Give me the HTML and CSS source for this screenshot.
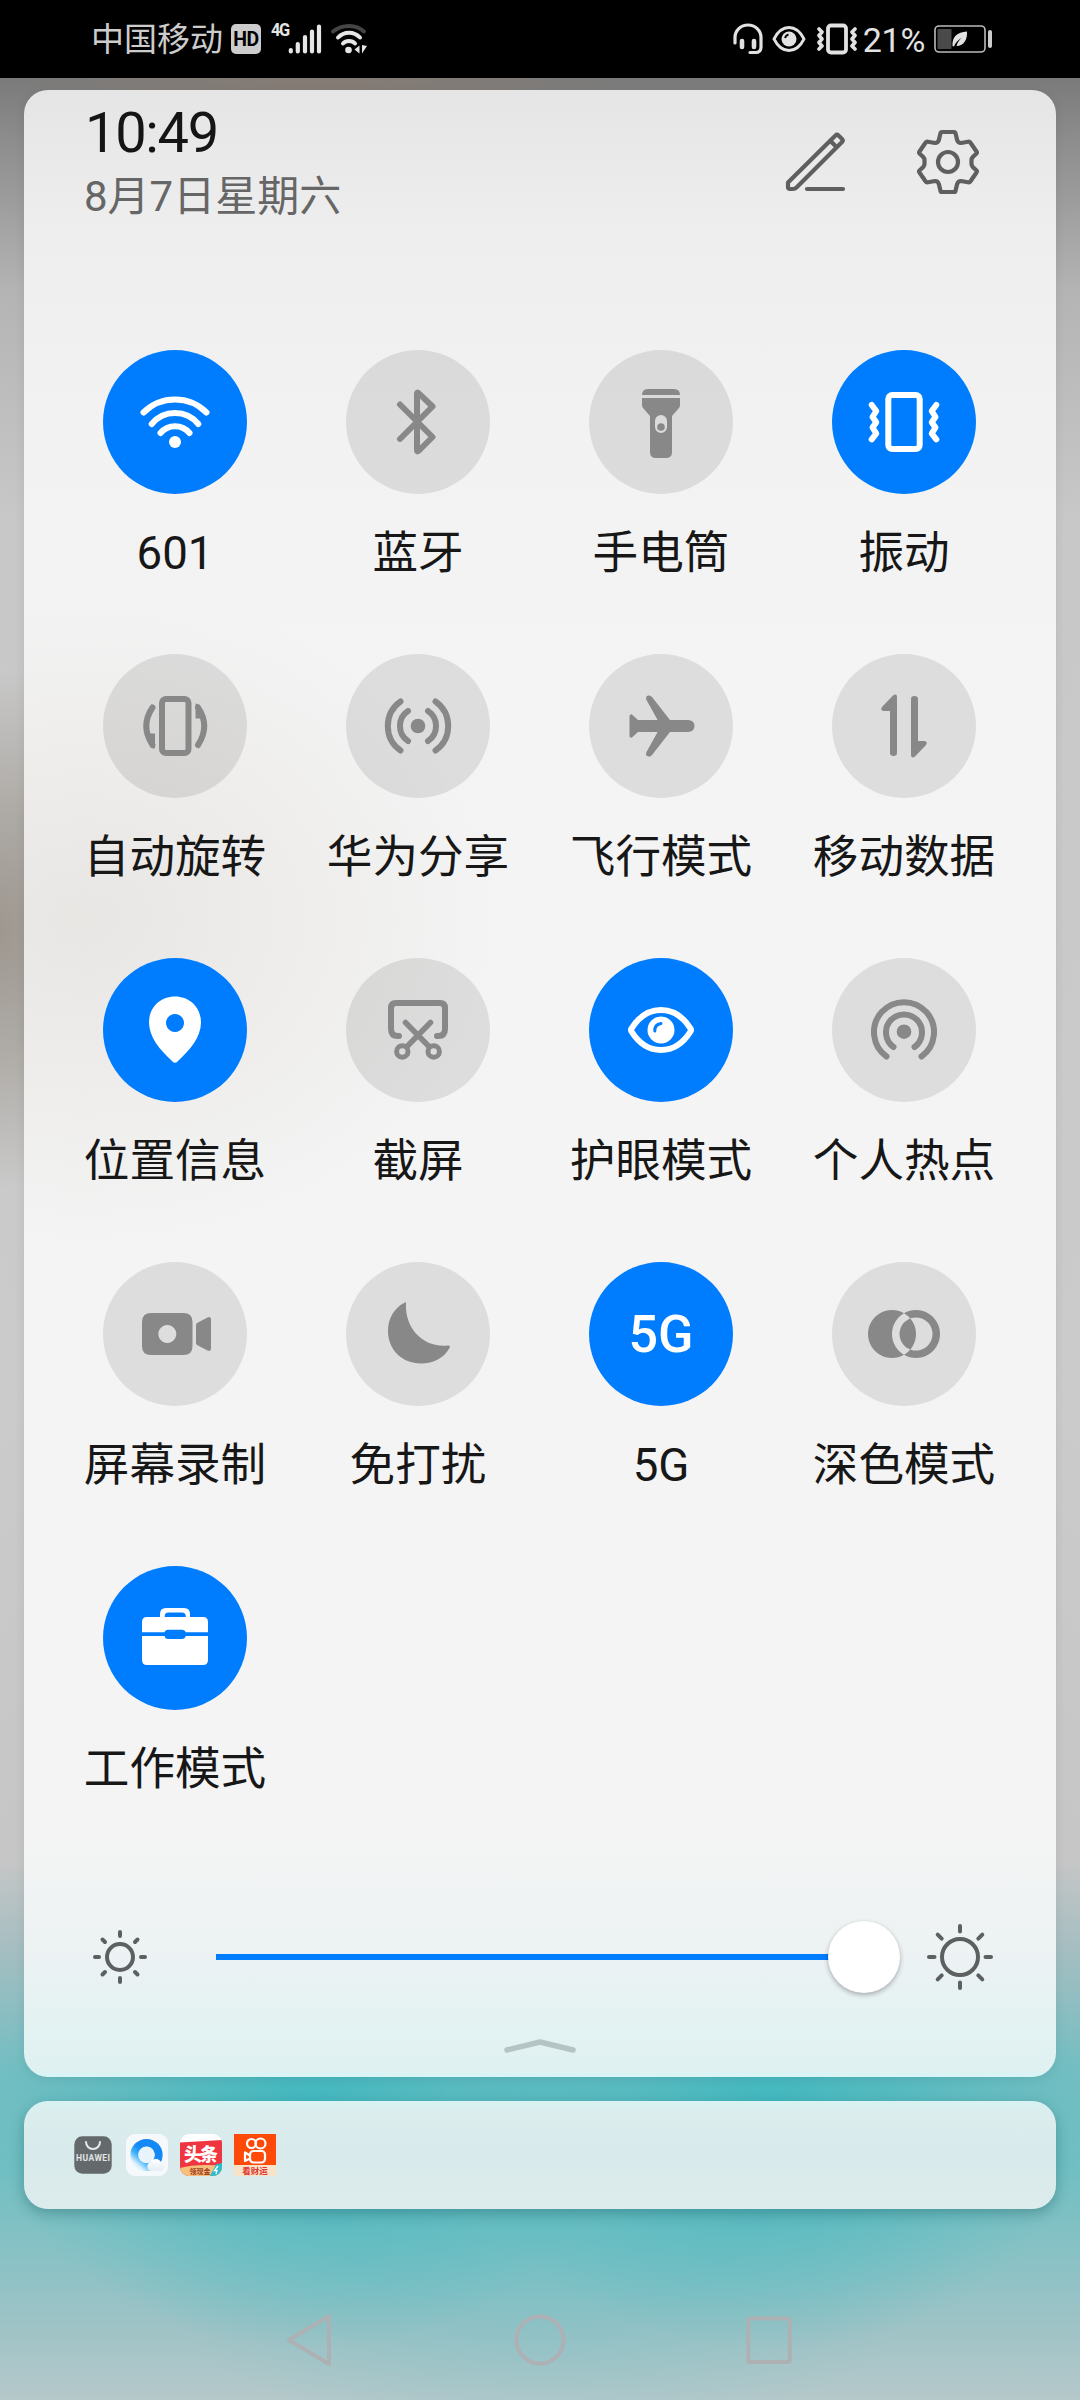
FILE: index.html
```
<!DOCTYPE html>
<html lang="zh-CN">
<head>
<meta charset="utf-8">
<title>控制中心</title>
<link rel="stylesheet" href="styles.css">
</head>
<body>
<div class="screen">
  <header class="status">
    <div class="status-left">
      <span class="carrier">中国移动</span>
      <span class="hd">HD</span>
      <span class="net">4G</span>
      <svg class="signal" width="34" height="32" viewBox="0 0 34 32" stroke="#e6e6e6" stroke-width="4.2" stroke-linecap="round"><path d="M2.800 27v1.400M9.800 21v7.400M17 14v14.400M24 8.500v20M31 3.500v25"/></svg>
      <svg class="wifi-small" width="38" height="32" viewBox="0 0 38 32" fill="none" stroke-width="4" stroke-linecap="round"><path d="M3 8.500C12 1 26 1 34 8.500" stroke="#444"/><path d="M8 14.500C14 8 24 8 30 14.500M13 20.500C16 17 22 17 25 20.500" stroke="#e6e6e6"/><circle cx="18.500" cy="27" r="3.300" fill="#e6e6e6"/><path d="M29.500 22.500v8l-5-4zM32 22l5 1-5 7.500z" fill="#e6e6e6"/></svg>
    </div>
    <div class="status-right">
      <svg width="30" height="32" viewBox="0 0 30 32" fill="none" stroke="#e2e2e2" stroke-width="3.200" stroke-linecap="round"><path d="M2 20v-5.500a13 12.500 0 0 1 26 0V24q0 5.500-5.500 5.500H17"/><path d="M9 18v6M21 18v6" stroke-width="4.600"/></svg>
      <svg class="st-eye" width="34" height="28" viewBox="0 0 34 28" fill="none" stroke="#e2e2e2" stroke-width="2.800"><path d="M2 14C6 6 11 2.500 17 2.500S28 6 32 14C28 22 23 25.500 17 25.500S6 22 2 14z"/><circle cx="17" cy="14" r="7.500" fill="#e2e2e2" stroke="none"/><path d="M13 13a5 5 0 0 1 3.500-3.500" stroke="#000" stroke-width="2"/></svg>
      <svg class="st-vib" width="40" height="32" viewBox="0 0 40 32" fill="none" stroke="#e2e2e2" stroke-width="3.800" stroke-linecap="round" stroke-linejoin="round"><rect x="11" y="2.500" width="18" height="27" rx="3"/><path d="M2 6l3 3-3 3.500 3 3.500-3 3.500 3 3.500-3 3M38 6l-3 3 3 3.500-3 3.500 3 3.500-3 3.500 3 3" stroke-width="3.600"/></svg>
      <span class="percent">21%</span>
      <svg width="58" height="28" viewBox="0 0 58 28"><rect x="1" y="1" width="50" height="26" rx="4" fill="none" stroke="#bbb" stroke-width="1.600"/><rect x="3.500" y="4" width="14" height="20" rx="1" fill="#4a4a4a"/><path d="M18.500 21C18 12 23 7 33 6.500C33.500 14 30 21 22.500 21C23 18 25.500 14.500 28 12.500C24 15 21 18 20 21.500z" fill="#e2e2e2"/><rect x="54" y="5" width="4" height="18" rx="2" fill="#ccc"/></svg>
    </div>
  </header>

  <main class="shade">
    <section class="panel">
      <div class="head">
        <div class="clock">
          <div class="time">10:49</div>
          <div class="date">8月7日星期六</div>
        </div>
        <div class="actions">
          <svg width="64" height="66" viewBox="0 0 64 66" fill="none" stroke="#5f5f5f" stroke-width="4.200" stroke-linecap="round" stroke-linejoin="round"><path d="M4 53.500L51.500 6.500Q53 5 54.500 6.500L58 10Q59.500 11.500 58 13L12.500 58.500Q11 60 9 60H6Q4 60 4 58z"/><path d="M46.500 12l6 6M23 60H59"/></svg>
          <svg width="66" height="66" viewBox="-33 -33 66 66" fill="none" stroke="#5f5f5f" stroke-width="4.200" stroke-linejoin="round"><path d="M-6 -30H6Q7.300 -30 7.600 -28.500L9 -22.500Q9.800 -19 13 -19L20 -20.300Q21.600 -20.600 22.500 -19.300L28.500 -10.500Q29.300 -9.300 28.500 -8.500L24.800 -5Q23.500 -3.500 23.500 -2V2Q23.500 3.500 24.800 5L28.500 8.500Q29.300 9.300 28.500 10.500L22.500 19.300Q21.600 20.600 20 20.300L13 19Q9.800 19 9 22.500L7.600 28.500Q7.300 30 6 30H-6Q-7.300 30 -7.600 28.500L-9 22.500Q-9.800 19 -13 19L-20 20.300Q-21.600 20.600 -22.500 19.300L-28.500 10.500Q-29.300 9.300 -28.500 8.500L-24.800 5Q-23.500 3.500 -23.500 2V-2Q-23.500 -3.500 -24.800 -5L-28.500 -8.500Q-29.300 -9.300 -28.500 -10.500L-22.500 -19.300Q-21.600 -20.600 -20 -20.300L-13 -19Q-9.800 -19 -9 -22.500L-7.600 -28.500Q-7.300 -30 -6 -30z"/><circle r="10"/></svg>
        </div>
      </div>

      <div class="tiles">
        <div class="tile on"><svg class="icon line" viewBox="0 0 144 144"><path d="M40.500 62.500A44.700 44.700 0 0 1 103.500 62.500M48.700 74A30.200 30.200 0 0 1 95.300 74M57.500 83A19 19 0 0 1 86.500 83"/><circle class="solid" cx="72" cy="92" r="6"/></svg><span>601</span></div>
        <div class="tile"><svg class="icon line" viewBox="0 0 144 144"><path d="M54 54.500L86.500 87L73 100.500Q71 102.500 71 100V44Q71 41.500 73 43.500L86.500 56.500L54 89"/></svg><span>蓝牙</span></div>
        <div class="tile"><svg class="icon" viewBox="0 0 144 144"><path d="M59 39H85Q91 39 91 45H53Q53 39 59 39z"/><path fill-rule="evenodd" d="M53 48H91V55Q91 57 90 58L83 66V102Q83 108 77 108H67Q61 108 61 102V66L54 58Q53 57 53 55zM72 65a6 6 0 0 0-6 6v6a6 6 0 0 0 12 0v-6a6 6 0 0 0-6-6z"/><circle cx="72" cy="77" r="3.800"/></svg><span>手电筒</span></div>
        <div class="tile on"><svg class="icon line" viewBox="0 0 144 144"><rect x="56.300" y="45" width="31.400" height="54" rx="4"/><path d="M39.700 55L44.300 61L40.500 67L44.300 72.200L40.500 77.500L44.300 83.500L39.700 89.300M104.300 55L99.700 61L103.500 67L99.700 72.200L103.500 77.500L99.700 83.500L104.300 89.300"/></svg><span>振动</span></div>

        <div class="tile"><svg class="icon line" viewBox="0 0 144 144"><rect x="59" y="45" width="26.500" height="54" rx="4"/><path d="M49.500 53.500Q37 72 49.500 91M95 91Q107.500 72 95 53.500"/><path class="solid" d="M43 79.500H52V93Q52 96 49.500 94zM101.500 64.500H92.500V51Q92.500 48.500 95 50.500z"/></svg><span>自动旋转</span></div>
        <div class="tile"><svg class="icon line" viewBox="0 0 144 144"><circle class="solid" cx="72" cy="72" r="7.300"/><path d="M62 57A18 18 0 0 0 62 87M82 57A18 18 0 0 1 82 87M54.500 47.500A30 30 0 0 0 54.500 96.500M89.500 47.500A30 30 0 0 1 89.500 96.500"/></svg><span>华为分享</span></div>
        <div class="tile"><svg class="icon" viewBox="0 0 144 144"><path d="M41.500 60.500Q42.500 60 43.500 61L49 66H68.600L57.500 46Q56 42.500 59 41.500Q61.500 41 63 43L81 66H99Q105.500 66.500 105.500 72Q105.500 77.500 99 78H81L63 101Q61.500 103 59 102.500Q56 101.500 57.500 98L68.600 78H49L43.500 83Q42.500 84 41.500 83.500Q40.500 83 40.500 82V62Q40.500 61 41.500 60.500z"/></svg><span>飞行模式</span></div>
        <div class="tile"><svg class="icon" viewBox="0 0 144 144"><path d="M65 43V99Q65 102 61.600 102Q58 102 58 99V57H51.500Q48 56.500 50 53L61 41.500Q65 39 65 43zM79 101V45Q79 42 82.400 42Q86 42 86 45V87H92.500Q96 87.500 94 91L83 102.500Q79 105 79 101z"/></svg><span>移动数据</span></div>

        <div class="tile on"><svg class="icon" viewBox="0 0 144 144"><path fill-rule="evenodd" d="M72 38.500C57 38.500 46 49.500 46 64.500C46 79 57 92 69.500 103.500Q72 106 74.500 103.500C87 92 98 79 98 64.500C98 49.500 87 38.500 72 38.500zM72 56a9 9 0 1 0 .01 0z"/></svg><span>位置信息</span></div>
        <div class="tile"><svg class="icon line" viewBox="0 0 144 144"><path d="M53 78H52Q45 78 45 71V50Q45 45 50 45H94Q99 45 99 50V71Q99 78 92 78H91"/><path d="M59.500 64.500L83 88.500M84.500 64.500L61 88.500" stroke-width="5.500"/><circle cx="56.300" cy="93.500" r="5.700" stroke-width="5"/><circle cx="87.700" cy="93.500" r="5.700" stroke-width="5"/></svg><span>截屏</span></div>
        <div class="tile on"><svg class="icon line" viewBox="0 0 144 144"><path d="M42.500 70.500C50 58.500 60 52 72 52S94 58.500 101.500 70.500Q102.500 72 101.500 73.500C94 85.500 84 92 72 92S50 85.500 42.500 73.500Q41.500 72 42.500 70.500z"/><circle class="solid" cx="72" cy="72" r="13.500"/><path d="M65.800 73Q65.500 66.500 72 65.500" class="glint"/></svg><span>护眼模式</span></div>
        <div class="tile"><svg class="icon line" viewBox="0 0 144 144"><circle class="solid" cx="72" cy="73.700" r="7.300"/><path d="M61.500 89A18 18 0 1 1 82.500 89M54.500 98.500A30 30 0 1 1 89.500 98.500"/></svg><span>个人热点</span></div>

        <div class="tile"><svg class="icon" viewBox="0 0 144 144"><path fill-rule="evenodd" d="M48 51H80.500Q89.500 51 89.500 60V84Q89.500 93 80.500 93H48Q39 93 39 84V60Q39 51 48 51zM64.300 63a9 9 0 1 0 .01 0z"/><path d="M93 63Q93 62 94 61L104.500 55.500Q108 54 108 57.500V86.500Q108 90 104.500 88.500L94 83Q93 82 93 81z"/></svg><span>屏幕录制</span></div>
        <div class="tile"><svg class="icon" viewBox="0 0 144 144"><path d="M58 41Q60.500 39 60 42.500C59 66 77 86 101.500 83.500Q105 83 103.500 86C98 96 87.500 101.500 75 101.500C56 101.500 42 87.500 42 69C42 56 48.500 46 58 41z"/></svg><span>免打扰</span></div>
        <div class="tile on"><div class="icon word">5G</div><span>5G</span></div>
        <div class="tile"><svg class="icon" viewBox="0 0 144 144"><path fill-rule="evenodd" d="M60 48a24 24 0 1 0 .01 0zM84 48a24 24 0 1 0 .01 0zM84 55.500a16.500 16.500 0 1 0 .01 0z"/></svg><span>深色模式</span></div>

        <div class="tile on"><svg class="icon" viewBox="0 0 144 144"><path fill-rule="evenodd" d="M57 51V48Q57 42 63 42H81Q87 42 87 48V51H100Q105 51 105 56V66.300H82.700Q82 63.700 79 63.700H65Q62 63.700 61.700 66.300H39V56Q39 51 44 51zM61.700 51H82.700V50Q82.700 46.500 79 46.500H65.500Q61.700 46.500 61.700 50z"/><path d="M39 70H61.700Q62 73 65 73H79Q82 73 82.700 70H105V94Q105 99 100 99H44Q39 99 39 94z"/></svg><span>工作模式</span></div>
      </div>

      <div class="brightness">
        <svg class="sun-s" width="56" height="56" viewBox="-28 -28 56 56"><circle r="13"/><path d="M0 -21V-25M0 21V25M-21 0H-25M21 0H25M-15 -15L-17.500 -17.500M15 -15L17.500 -17.500M-15 15L-17.500 17.500M15 15L17.500 17.500"/></svg>
        <div class="slider"><div class="thumb"></div></div>
        <svg class="sun-l" width="68" height="68" viewBox="-34 -34 68 68"><circle r="18"/><path d="M0 -25.500V-31M0 25.500V31M-25.500 0H-31M25.500 0H31M-18.300 -18.300L-22.300 -22.300M18.300 -18.300L22.300 -22.300M-18.300 18.300L-22.300 22.300M18.300 18.300L22.300 22.300"/></svg>
      </div>
      <svg class="collapse" width="74" height="20" viewBox="0 0 74 20" fill="none" stroke="#b4c3c4" stroke-width="5.500" stroke-linecap="round" stroke-linejoin="round"><path d="M4 13L37 5L70 13"/></svg>
    </section>

    <section class="notices">
      <svg width="42" height="42" viewBox="0 0 42 42"><rect x="2.300" y="2.300" width="37.400" height="37.400" rx="8" fill="#64696b"/><path d="M14 8a7 7 0 0 0 14 0" fill="none" stroke="#e6eaea" stroke-width="2" stroke-linecap="round"/><text class="lbl-hw" x="21" y="27" textLength="34">HUAWEI</text></svg>
      <svg width="42" height="42" viewBox="0 0 42 42"><defs><linearGradient id="qb" x1=".9" y1=".2" x2=".2" y2="1"><stop offset=".4" stop-color="#1488f5"/><stop offset=".7" stop-color="#3fb2fa"/><stop offset="1" stop-color="#dff2fd"/></linearGradient><linearGradient id="cl" x1="0" y1="0" x2="0" y2="1"><stop offset="0" stop-color="#fff"/><stop offset="1" stop-color="#e6edf5"/></linearGradient></defs><rect width="42" height="42" rx="9" fill="#f6f9fc"/><circle cx="20.500" cy="21" r="12.200" fill="none" stroke="url(#qb)" stroke-width="7.800"/><circle cx="20.500" cy="20.500" r="8" fill="#e9f3fc"/><path d="M25 37a4.700 4.700 0 0 1-.5-9a5.800 5.800 0 0 1 10-.5a4.800 4.800 0 0 1-.5 9.500z" fill="url(#cl)"/></svg>
      <svg width="42" height="42" viewBox="0 0 42 42"><defs><clipPath id="tc"><rect width="42" height="42" rx="9"/></clipPath></defs><g clip-path="url(#tc)"><rect width="42" height="42" fill="#fff"/><path d="M0 8.500L42 6V42H0z" fill="#ee3540"/><path d="M0 34Q15 29.500 42 31.500V42H0z" fill="#f7bf7c"/><path d="M36 30.500L42 29V42H30z" fill="#27bfd0"/><path d="M38 32l-3.500 4.500h2.500l-1 3.500" fill="none" stroke="#fff" stroke-width="1.300"/><text class="lbl-tt" x="21" y="27" textLength="34">头条</text><text class="lbl-tt2" x="20" y="40">领现金</text></g></svg>
      <svg width="42" height="42" viewBox="0 0 42 42"><rect width="42" height="42" fill="#fe4a09"/><rect y="31" width="42" height="11" fill="#f9e3c8"/><g fill="none" stroke="#fff" stroke-width="2.200" stroke-linejoin="round"><circle cx="17.500" cy="9.500" r="4.500"/><circle cx="26.500" cy="9.500" r="5"/><rect x="16" y="17" width="15" height="11.500" rx="3.500"/><path d="M16 21.500L11 18.500V27L16 24.500"/></g><text class="lbl-ks" x="21" y="39.500">看财运</text></svg>
    </section>
  </main>

  <nav class="nav">
    <svg width="50" height="56" viewBox="0 0 50 56"><path d="M44 4V52L4 28z"/></svg>
    <svg width="56" height="56" viewBox="0 0 56 56"><circle cx="28" cy="28" r="23.500"/></svg>
    <svg width="50" height="56" viewBox="0 0 50 56"><rect x="3.300" y="6.500" width="41.500" height="43.500" rx="2"/></svg>
  </nav>
</div>
</body>
</html>
```
FILE: styles.css
```
* { box-sizing: border-box; }
body { margin: 0; }
svg { display: block; flex: none; }

.screen {
  width: 1080px;
  height: 2400px;
  display: flex;
  flex-direction: column;
  font-family: Roboto, "Noto Sans CJK SC", sans-serif;
  background:
    radial-gradient(300px 30px at 320px 84px, rgba(145, 125, 110, .5), transparent),
    radial-gradient(160px 260px at 0 930px, rgba(134, 124, 112, .65), rgba(140, 132, 122, .45) 45%, transparent),
    radial-gradient(320px 250px at 310px 2100px, rgba(52, 182, 190, .75), transparent),
    radial-gradient(320px 250px at 770px 2100px, rgba(52, 182, 190, .75), transparent),
    radial-gradient(420px 200px at 540px 2240px, rgba(90, 188, 194, .45), transparent),
    linear-gradient(#7a7a7a 78px, #8a8a8a 130px, #b4b4b4 290px, #c8c8c8 520px, #cbcbcb 1400px, #c6c6c6 1860px, #a5bec1 1950px, #74bec2 2070px, #70bfc2 2170px, #8ac2c5 2260px, #a0c3c6 2330px, #b5c8ca 2400px);
}

.status {
  height: 78px;
  padding: 0 88px 0 91px;
  background: #000;
  display: flex;
  justify-content: space-between;
  align-items: center;
}
.status-left, .status-right { display: flex; align-items: center; }
.carrier { padding-top: 2px; font-size: 33px; line-height: 40px; color: #ccc; }
.hd {
  width: 30px;
  height: 30px;
  margin-left: 8px;
  border-radius: 5px;
  background: #ccc;
  color: #000;
  font-size: 19.500px;
  line-height: 31px;
  font-weight: 700;
  text-align: center;
  letter-spacing: -.5px;
}
.net {
  width: 18px;
  margin-left: 10px;
  padding-bottom: 18px;
  color: #e6e6e6;
  font: 700 19px/18px Roboto, sans-serif;
  letter-spacing: -1.500px;
  transform: scaleX(.86);
  transform-origin: left;
}
.signal { margin-left: -1px; }
.wifi-small { margin-left: 8px; }
.st-eye { margin-left: 9px; }
.st-vib { margin-left: 11px; }
.percent { margin: 2px 9px 0 6px; font-size: 34px; line-height: 40px; color: #e2e2e2; letter-spacing: -.3px; }

.shade {
  padding: 12px 24px 0;
  display: flex;
  flex-direction: column;
  gap: 24px;
}

.panel {
  height: 1987px;
  border-radius: 24px;
  display: flex;
  flex-direction: column;
  align-items: center;
  box-shadow: 0 2px 12px rgba(0, 0, 0, .08);
  background:
    radial-gradient(420px 330px at 60px 830px, rgba(226, 223, 219, .65), transparent),
    linear-gradient(#e5e5e5, #eeeeee 140px, #f2f2f2 330px, #f4f4f4 600px, #f4f4f4 1740px, #ecf2f3 1870px, #e2f2f2 1950px, #e0f1f1 1980px, #d6f5f5);
}

.head {
  width: 100%;
  height: 260px;
  padding: 10px 75px 0 60px;
  display: flex;
  justify-content: space-between;
}
.time { padding-left: 1px; font-size: 56px; line-height: 66px; color: #151515; letter-spacing: -1.300px; }
.date { font-size: 42px; line-height: 62px; color: #666; }
.actions { display: flex; gap: 67px; padding-top: 29px; }

.tiles {
  width: 972px;
  margin-right: 1px;
  display: grid;
  grid-template-columns: repeat(4, 243px);
  grid-auto-rows: 304px;
}
.tile { display: flex; flex-direction: column; align-items: center; }
.tile span { margin-top: 30px; font-size: 45.600px; line-height: 60px; color: #171717; white-space: nowrap; }
.icon {
  width: 144px;
  height: 144px;
  border-radius: 50%;
  background: rgba(0, 0, 0, .095);
  fill: #888;
  stroke: none;
}
.on .icon { background: #007dff; fill: #fff; }
.line { fill: none; stroke: #888; stroke-width: 6; stroke-linecap: round; stroke-linejoin: round; }
.on .line { fill: none; stroke: #fff; }
.icon .solid { fill: #888; stroke: none; }
.on .solid { fill: #fff; }
.on .icon .solid { fill: #fff; }
.glint { stroke: #007dff; stroke-width: 3; }
.word { color: #fff; font-size: 52px; line-height: 146px; font-weight: 500; text-align: center; }

.brightness {
  width: 100%;
  height: 72px;
  margin-top: 51px;
  padding: 0 62px 0 68px;
  display: flex;
  align-items: center;
}
.brightness svg { fill: none; stroke: #5c6061; stroke-width: 4; stroke-linecap: round; }
.slider {
  width: 684px;
  height: 72px;
  margin-left: 68px;
  display: flex;
  justify-content: flex-end;
  background: linear-gradient(#007dff, #007dff) 0 center / 650px 6px no-repeat;
}
.thumb { width: 72px; height: 72px; border-radius: 50%; background: #fff; box-shadow: 0 2px 5px rgba(0, 0, 0, .3); }
.sun-l { margin-left: 26px; }
.collapse { margin-top: 44px; }

.notices {
  height: 108px;
  padding: 0 48px;
  border-radius: 24px;
  display: flex;
  align-items: center;
  gap: 12px;
  box-shadow: 0 5px 14px rgba(0, 60, 65, .3);
  background: linear-gradient(#d8f2f2, #dcedee 12px, #d9eaec 50px, #dcecec);
}
.lbl-hw { font: 700 8.500px Roboto, sans-serif; fill: #e0e5e5; text-anchor: middle; }
.lbl-tt { font: 900 18px "Noto Sans CJK SC", sans-serif; fill: #fff; text-anchor: middle; }
.lbl-tt2 { font: 700 7px "Noto Sans CJK SC", sans-serif; fill: #a03a20; text-anchor: middle; }
.lbl-ks { font: 700 8.500px "Noto Sans CJK SC", sans-serif; fill: #e0322e; text-anchor: middle; }

.nav {
  margin-top: 103px;
  display: flex;
  justify-content: center;
  gap: 177px;
}
.nav svg { fill: none; stroke: #adb1b3; stroke-width: 4; stroke-linejoin: round; }
```
